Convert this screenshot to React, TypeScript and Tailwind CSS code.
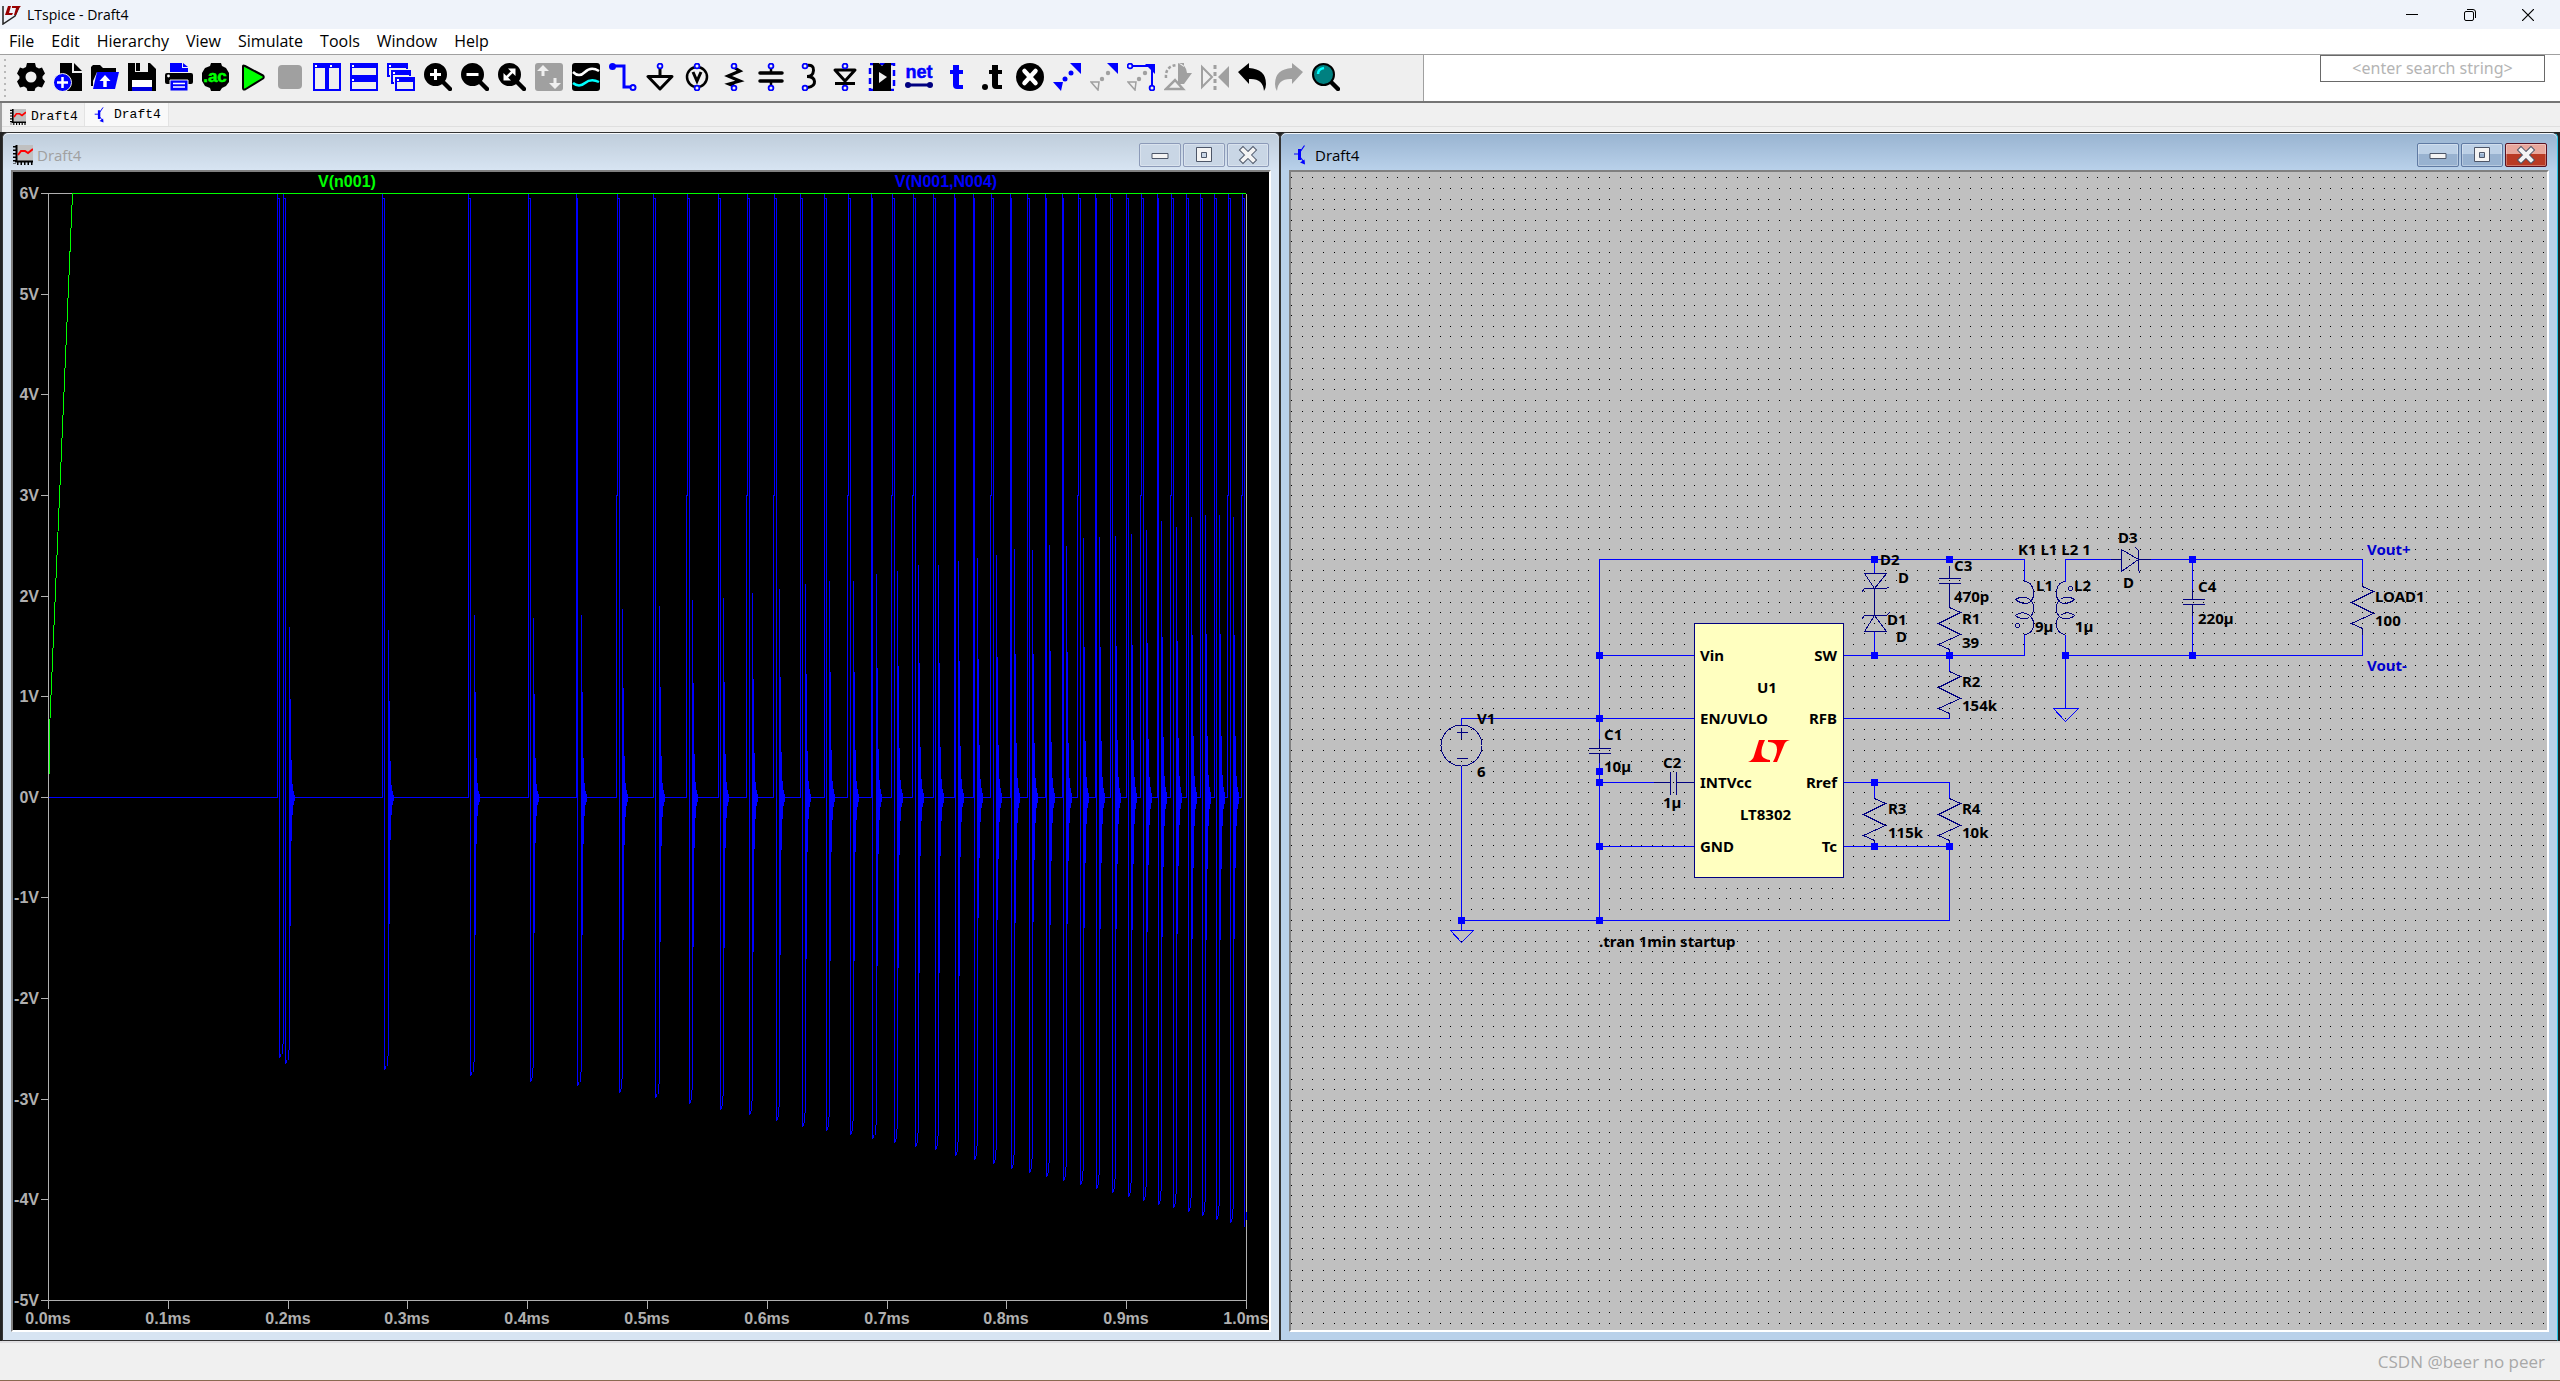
import { ReactNode } from "react";

const menus = ["File", "Edit", "Hierarchy", "View", "Simulate", "Tools", "Window", "Help"];

/* ---------- toolbar icons, all on a 28x28 grid ---------- */

const Pin = ({ x, y }: { x: number; y: number }) => (
  <circle cx={x} cy={y} r="2.4" fill="#efefef" stroke="#00f" strokeWidth="1.8" />
);

const Lens = ({ fill = "#000" }: { fill?: string }) => (
  <>
    <path d="M18 18l8 8" stroke="#000" strokeWidth="4.5" strokeLinecap="round" />
    <circle cx="11.5" cy="11.5" r="10.5" fill={fill} stroke="#000" strokeWidth="2" />
  </>
);

const tools: [string, ReactNode][] = [
  ["Settings", (
    <path fillRule="evenodd" d="M10 0h8l1 4 3 1.500 3-1 3 6-2.500 3 0 2 2.500 3-3 6-4-1-2.500 1.500-1 3h-7l-1-3-2.500-1.500-4 1-3-6 2.500-3 0-2-2.500-3 3-6 3 1 3-1.500zM14 8.500a5.500 5.500 0 1 0 0 11a5.500 5.500 0 1 0 0-11z" />
  )],
  ["New schematic", (
    <>
      <path d="M6 0h12v10h10v18H6z" />
      <path d="M20 0l8 8h-8z" />
      <circle cx="8.500" cy="19.500" r="9" fill="#00f" stroke="#efefef" strokeWidth="1" />
      <path d="M8.500 14v11M3 19.500h11" stroke="#fff" strokeWidth="2.500" />
    </>
  )],
  ["Open", (
    <>
      <path d="M0 4l2-2h7l3 3h13v4H6L2 18V23H0z" />
      <path d="M6 9h22l-4 17H2z" fill="#00f" />
      <path d="M14 24v-9" stroke="#fff" strokeWidth="3.500" />
      <path d="M8.500 18l5.500-6 5.500 6z" fill="#fff" />
    </>
  )],
  ["Save", (
    <>
      <path d="M0 0h22l6 6v22H0z" />
      <path d="M7 0h13v9H7z" fill="#efefef" />
      <path d="M8 0h4v8H8z" />
      <path d="M4 17h20v7H4z" fill="#fff" />
      <path d="M4 24h20v4H4z" fill="#00d" />
    </>
  )],
  ["Print", (
    <>
      <path d="M5 0h12v5h6v4H5z" fill="#00f" />
      <path d="M18 0l5 4h-5z" fill="#00f" />
      <rect y="10" width="28" height="11" rx="2" />
      <circle cx="3.500" cy="13" r="1.400" fill="#fff" />
      <path d="M5 17h18v11H5z" fill="#00f" stroke="#efefef" />
      <path d="M8 20.500h12M8 24h12" stroke="#fff" strokeWidth="1.500" />
    </>
  )],
  ["Edit simulation command", (
    <>
      <path d="M9 0h10l1 3 4 2 3 5v9l-3 4-4 2-2 3h-9l-1-3-5-2-3-5v-8l3-5 5-2z" />
      <text x="13" y="19" textAnchor="middle" className="font-['Liberation_Sans',sans-serif] text-[17px] font-bold" fill="#0f0" stroke="#0f0" strokeWidth=".5">.ac</text>
    </>
  )],
  ["Run", <path d="M4 3v22q0 2 2 1.500L24 15.500q1.500-1.500 0-3L6 3q-2-1-2 0z" fill="#0f0" stroke="#000" strokeWidth="2" strokeLinejoin="round" />],
  ["Halt", <rect x="2" y="2" width="24" height="24" rx="4" fill="#a0a0a0" />],
  ["Tile vertically", (
    <>
      <path fill="#efefef" stroke="#00f" strokeWidth="2" d="M1 1h12v26H1zM15 1h12v26H15z" />
      <path fill="#00f" d="M0 0h28v5H0z" />
      <path fill="#fff" d="M2 2h2v2H2zM17 2h2v2h-2z" />
    </>
  )],
  ["Tile horizontally", (
    <>
      <path fill="#efefef" stroke="#00f" strokeWidth="2" d="M1 1h26v12H1zM1 15h26v12H1z" />
      <path fill="#00f" d="M0 0h28v5H0zM0 13h28v6H0z" />
      <path fill="#fff" d="M2 2h2v2H2zM2 16h2v2H2z" />
    </>
  )],
  ["Cascade", (
    <>
      <path fill="#efefef" stroke="#00f" strokeWidth="2" d="M1 1h19v12H1z" />
      <path fill="#00f" d="M0 0h21v5H0z" />
      <path fill="#efefef" stroke="#efefef" strokeWidth="4" d="M5 8h18v12H5z" />
      <path fill="#efefef" stroke="#00f" strokeWidth="2" d="M5 8h18v12H5z" />
      <path fill="#00f" d="M4 7h20v5H4z" />
      <path fill="#efefef" stroke="#efefef" strokeWidth="4" d="M9 15h18v12H9z" />
      <path fill="#efefef" stroke="#00f" strokeWidth="2" d="M9 15h18v12H9z" />
      <path fill="#00f" d="M8 14h20v5H8z" />
      <path fill="#fff" d="M2 2h2v2H2zM6 9h2v2H6zM10 16h2v2h-2z" />
    </>
  )],
  ["Zoom in", <><Lens /><path d="M11.500 6v11M6 11.500h11" stroke="#fff" strokeWidth="3" /></>],
  ["Zoom out", <><Lens /><path d="M5.500 11.500h12" stroke="#fff" strokeWidth="3" /></>],
  ["Zoom to fit", (
    <>
      <Lens />
      <path d="M8 15l7-7" stroke="#fff" strokeWidth="2.500" />
      <path d="M10 5.500h7.500V13zM5.500 10v7.500H13z" fill="#fff" />
    </>
  )],
  ["Autorange", (
    <>
      <rect width="28" height="28" rx="3" fill="#a0a0a0" />
      <path d="M8 13V5M20 15v8" stroke="#efefef" strokeWidth="3" />
      <path d="M2 8l6-6 6 6zM14 20l6 6 6-6z" fill="#efefef" />
    </>
  )],
  ["Add trace", (
    <>
      <rect width="28" height="28" rx="3" />
      <path d="M1 9q6 6 12 0t14-1" fill="none" stroke="#fff" strokeWidth="2.500" />
      <path d="M1 20q6 5 12 0t14-1" fill="none" stroke="#0ff" strokeWidth="2.500" />
    </>
  )],
  ["Wire", (
    <>
      <path d="M3 3h12v21h8" fill="none" stroke="#00f" strokeWidth="3" />
      <circle cx="3.500" cy="3.500" r="3.500" fill="#00f" />
      <circle cx="24" cy="24.500" r="2.500" fill="#efefef" stroke="#00f" strokeWidth="2" />
    </>
  )],
  ["Ground", (
    <>
      <path d="M14 5v8M2 13.500h24L14 26z" fill="none" stroke="#000" strokeWidth="3" strokeLinejoin="round" />
      <Pin x={14} y={3} />
    </>
  )],
  ["Voltage source", (
    <>
      <circle cx="14" cy="14" r="10" fill="none" stroke="#000" strokeWidth="2.500" />
      <path d="M10 9l4 9 4-9" fill="none" stroke="#000" strokeWidth="3" />
      <Pin x={14} y={3} />
      <Pin x={14} y={25} />
    </>
  )],
  ["Resistor", (
    <>
      <path d="M15 5l5 3-12 5 12 5-11 3 5 2" fill="none" stroke="#000" strokeWidth="3" />
      <Pin x={14} y={3} />
      <Pin x={14} y={25} />
    </>
  )],
  ["Capacitor", (
    <>
      <path d="M3 10h22M3 18h22" stroke="#000" strokeWidth="3.500" strokeLinecap="round" />
      <path d="M14 4v5M14 19v5" stroke="#000" strokeWidth="2.500" />
      <Pin x={14} y={3} />
      <Pin x={14} y={25} />
    </>
  )],
  ["Inductor", (
    <>
      <path d="M13 2.500q7-1 6.500 5t-6.500 6q7 0 7.500 5t-7 6" fill="none" stroke="#000" strokeWidth="3" />
      <Pin x={11} y={3} />
      <Pin x={11} y={25} />
    </>
  )],
  ["Diode", (
    <>
      <path d="M4 7h20L14 18zM4 20.500h20" fill="none" stroke="#000" strokeWidth="3" strokeLinejoin="round" />
      <Pin x={14} y={3} />
      <Pin x={14} y={25} />
    </>
  )],
  ["Component", (
    <>
      <rect x="2" y="1" width="24" height="26" fill="none" stroke="#00f" strokeWidth="2.500" strokeDasharray="6 4" />
      <path d="M5 0h6l3 3 3-3h6v28H5z" />
      <path d="M11 9l8 5-8 6z" fill="#efefef" />
    </>
  )],
  ["Label net", (
    <>
      <text x="14" y="15" textAnchor="middle" className="font-['Liberation_Sans',sans-serif] text-[18px] font-bold" fill="#00f" stroke="#00f" strokeWidth=".5">net</text>
      <path d="M2 22h24" stroke="#000080" strokeWidth="3" />
      <circle cx="3" cy="22" r="3" fill="#000080" />
      <circle cx="25" cy="22" r="3" fill="#000080" />
    </>
  )],
  ["Text", <path d="M11 2h6v5h4v4h-4v11h4v4h-6q-4 0-4-4V11H8V7h3z" fill="#00f" />],
  ["SPICE directive", <><path d="M13 2h6v5h4v4h-4v11h4v4h-6q-4 0-4-4V11h-3V7h3z" /><circle cx="6" cy="24" r="3" /></>],
  ["Delete", <><circle cx="14" cy="14" r="14" /><path d="M8.500 8l11 12M19.500 8l-11 12" stroke="#fff" strokeWidth="4.500" strokeLinecap="round" /></>],
  ["Move", (
    <>
      <path d="M17 0h11v11zM0 19h10L8 28z" fill="#00f" />
      <circle cx="18" cy="10" r="2.500" fill="#00f" />
      <circle cx="12" cy="16" r="2.500" fill="#00f" />
    </>
  )],
  ["Copy", (
    <>
      <path d="M17 0h11v11z" fill="#00f" />
      <path d="M1 19h8L8 27z" fill="none" stroke="#a0a0a0" strokeWidth="1.500" />
      <circle cx="18" cy="10" r="2.200" fill="#a0a0a0" />
      <circle cx="12" cy="16" r="2.200" fill="#a0a0a0" />
    </>
  )],
  ["Drag", (
    <>
      <path d="M4 3h21v20" fill="none" stroke="#00f" strokeWidth="2" />
      <path d="M18 1h10v10z" fill="#00f" />
      <path d="M1 19h8L8 27z" fill="none" stroke="#a0a0a0" strokeWidth="1.500" />
      <circle cx="18" cy="10" r="2.200" fill="#a0a0a0" />
      <circle cx="12" cy="16" r="2.200" fill="#a0a0a0" />
      <Pin x={3} y={3} />
      <Pin x={25} y={25} />
    </>
  )],
  ["Rotate", (
    <>
      <path d="M2 15Q1 3 13 2" fill="none" stroke="#a0a0a0" strokeWidth="2.500" strokeDasharray="3 2" />
      <path d="M14 0q8 1 9 10h5l-8 11V0z" fill="#a0a0a0" />
      <path d="M14 0v21h6V4z" fill="#a0a0a0" />
      <path d="M2 26h17l-8-9z" fill="#efefef" stroke="#a0a0a0" strokeWidth="2.500" />
    </>
  )],
  ["Mirror", (
    <>
      <path d="M1 4v20l10-10z" fill="none" stroke="#a0a0a0" strokeWidth="2" />
      <path d="M28 3v22L17 14z" fill="#a0a0a0" />
      <path d="M14 2v25" stroke="#a0a0a0" strokeWidth="3" strokeDasharray="4 3" />
    </>
  )],
  ["Undo", <path d="M0 9L11 0v5q17 1 17 16 0 4-2 7-1-13-15-12v5z" />],
  ["Redo", <path d="M28 9L17 0v5Q0 6 0 21q0 4 2 7 1-13 15-12v5z" fill="#a0a0a0" />],
  ["Find", <><Lens fill="#008080" /><path d="M6 11q0-5 6-6" fill="none" stroke="#0ff" strokeWidth="2.500" /></>],
];

const PlotIcon = ({ className }: { className: string }) => (
  <svg viewBox="0 0 20 20" className={className}>
    <path d="M3 0h17v16H3z" fill="#c0c0c0" />
    <path d="M3.500 0v17M2 16.500h18" stroke="#000" strokeWidth="2" />
    <path d="M1.500 1v18M4 18.500h16" stroke="#000" strokeWidth="3" strokeDasharray="1.500 2" />
    <path d="M5 10l3-4h4l3 2 5-4" fill="none" stroke="#f00" strokeWidth="2" />
  </svg>
);

const TransistorIcon = ({ className }: { className: string }) => (
  <svg viewBox="0 0 12 20" className={className}>
    <path d="M0 9h5M6 7l4.500-6.500M6 12l4 5" fill="none" stroke="#00f" strokeWidth="1.200" />
    <path d="M4 4h3v11H4zM11 19.500l-5-2 4.500-3z" fill="#00f" />
  </svg>
);

/* ---------- waveform ---------- */

// rise x, fall x, ring x, bottom y, ring peak y
const pulses = [
  [277, 279, 283, 1057, 193],
  [283, 285, 289, 1063, 626],
  [382, 384, 388, 1069, 629],
  [468, 470, 474, 1075, 614],
  [528, 530, 533, 1081, 617],
  [576, 577, 581, 1085, 614],
  [616, 619, 622, 1092, 608],
  [653, 655, 659, 1097, 605],
  [686, 689, 692, 1103, 599],
  [718, 720, 723, 1109, 597],
  [746, 749, 752, 1114, 592],
  [773, 776, 779, 1120, 588],
  [800, 802, 805, 1126, 583],
  [824, 826, 829, 1130, 580],
  [847, 850, 853, 1134, 580],
  [871, 872, 876, 1138, 573],
  [891, 894, 897, 1142, 570],
  [912, 915, 918, 1146, 564],
  [933, 935, 938, 1149, 564],
  [954, 955, 958, 1155, 560],
  [973, 974, 977, 1159, 557],
  [990, 993, 996, 1163, 554],
  [1010, 1011, 1014, 1168, 548],
  [1027, 1029, 1032, 1172, 549],
  [1045, 1046, 1049, 1176, 544],
  [1062, 1063, 1066, 1180, 545],
  [1077, 1080, 1083, 1184, 537],
  [1095, 1096, 1099, 1188, 536],
  [1110, 1112, 1115, 1192, 535],
  [1126, 1128, 1131, 1196, 533],
  [1140, 1143, 1146, 1200, 529],
  [1157, 1158, 1161, 1204, 520],
  [1170, 1173, 1176, 1207, 526],
  [1186, 1188, 1191, 1211, 516],
  [1200, 1202, 1205, 1215, 514],
  [1214, 1216, 1219, 1219, 514],
  [1227, 1230, 1233, 1222, 516],
];

const ringUp = [0.58, 0.22, 0.08, 0.04, 0.02];
const ringDown = [0.5, 0.25, 0.1, 0.04, 0.02];

function tracePath() {
  const zero = 797;
  let d = "";
  let last = 48;
  pulses.forEach(([rise, fall, ring, bottom, peak], i) => {
    const top = fall - rise > 2 ? rise + 1 : rise;
    if (rise > last) d += `M${last} ${zero}H${rise}`;
    d += `M${rise} ${zero}V495H${top}V193M${top} 193V198H${fall}V${bottom}`;
    d += `M${fall + 1} ${bottom - 4}V${bottom - 1}M${ring - 1} ${bottom - 14}V${bottom - 4}M${ring} ${bottom - 14}V${peak}`;
    if (i > 0) {
      const amp = zero - peak;
      ringUp.forEach((up, k) => {
        // the early pulses decay from a deeper first swing
        const down = k === 0 && i < 20 ? 0.75 : ringDown[k];
        d += `M${ring + 1 + k} ${Math.round(zero - amp * up)}V${Math.round(zero + amp * down)}`;
      });
    }
    last = ring;
  });
  return d + "M1233 797H1241M1241 797V495H1242V193M1242 198H1244V1226M1246 1211V1219";
}

function Waveform() {
  return (
    <svg viewBox="13 172 1256 1158" className="block w-full bg-black font-['Liberation_Sans',sans-serif] text-[16px] font-bold">
      <g transform="translate(.5 .5)" shapeRendering="crispEdges" fill="none" strokeWidth="1">
        <path d="M48 193V1308M48 193H72M1246 193V1308M48 1300H1246" stroke="#b0b0b0" />
        {Array.from({ length: 12 }, (_, i) => (
          <path key={i} d={`M40 ${Math.round(193 + i * 100.64)}h8`} stroke="#b0b0b0" />
        ))}
        {Array.from({ length: 9 }, (_, i) => (
          <path key={i} d={`M${Math.round(167.8 + i * 119.8)} 1300v8`} stroke="#b0b0b0" />
        ))}
        <path d="M49 773V730L72 193H1245" stroke="#0f0" />
        <path d={tracePath()} stroke="#00f" />
      </g>
      <g fill="#b0b0b0">
        {Array.from({ length: 12 }, (_, i) => (
          <text key={i} x="39" y={Math.round(199 + i * 100.64)} textAnchor="end">{6 - i}V</text>
        ))}
        {Array.from({ length: 11 }, (_, i) => (
          <text key={i} x={Math.round(48 + i * 119.8)} y="1324" textAnchor="middle">{(i / 10).toFixed(1)}ms</text>
        ))}
      </g>
      <text x="347" y="187" textAnchor="middle" fill="#0f0">V(n001)</text>
      <text x="946" y="187" textAnchor="middle" fill="#00f">V(N001,N004)</text>
    </svg>
  );
}

/* ---------- schematic ---------- */

function gridPath() {
  let d = "";
  for (let r = 0; r < 109; r++) {
    for (let c = 0; c < 119; c++) {
      d += `M${Math.floor(1291.7 + c * 10.605)} ${Math.floor(177.9 + r * 10.603)}h1v1h-1z`;
    }
  }
  return d;
}

const resistors = [[1949, 607], [1949, 671], [1874, 798], [1949, 798], [2362, 586]];

const nodes = [
  [1599, 655], [1599, 718], [1599, 771], [1599, 782], [1599, 846], [1599, 920], [1461, 920],
  [1874, 559], [1949, 559], [1874, 655], [1949, 655], [1874, 782], [1874, 846], [1949, 846],
  [2065, 655], [2192, 559], [2192, 655],
];

const labels: [number, number, string][] = [
  [1477, 724, "V1"], [1477, 777, "6"], [1604, 740, "C1"], [1604, 772, "10µ"],
  [1663, 768, "C2"], [1663, 808, "1µ"], [1700, 661, "Vin"], [1700, 724, "EN/UVLO"],
  [1700, 788, "INTVcc"], [1700, 852, "GND"], [1757, 693, "U1"], [1740, 820, "LT8302"],
  [1599, 947, ".tran 1min startup"], [1880, 565, "D2"], [1898, 583, "D"], [1887, 625, "D1"],
  [1896, 642, "D"], [1954, 571, "C3"], [1954, 602, "470p"], [1962, 624, "R1"], [1962, 648, "39"],
  [1962, 687, "R2"], [1962, 711, "154k"], [1888, 814, "R3"], [1888, 838, "115k"],
  [1962, 814, "R4"], [1962, 838, "10k"], [2036, 591, "L1"], [2074, 591, "L2"],
  [2035, 632, "9µ"], [2075, 632, "1µ"], [2018, 555, "K1 L1 L2 1"], [2118, 543, "D3"],
  [2123, 588, "D"], [2198, 592, "C4"], [2198, 624, "220µ"], [2375, 602, "LOAD1"], [2375, 626, "100"],
];

const pins: [number, string][] = [[661, "SW"], [724, "RFB"], [788, "Rref"], [852, "Tc"]];

const coil =
  "M2024 581C2034 582 2036 596 2029 602C2024 604 2018 602 2015 599C2019 596 2026 596 2029 599C2035 604 2035 611 2029 617C2024 620 2018 618 2015 615C2019 611 2026 612 2029 615C2036 621 2034 633 2024 634";

function Schematic() {
  return (
    <svg viewBox="1291 172 1256 1158" className="block w-full bg-[#c0c0c0] font-['Noto_Sans',sans-serif] text-[15px] font-bold">
      <path d={gridPath()} fill="#000" shapeRendering="crispEdges" />
      <g transform="translate(.5 .5)" shapeRendering="crispEdges" fill="none" strokeWidth="1">
        <g stroke="#00f">
          <path d="M1599 738V559H2024V581M1599 762V920M2024 634V655H1843M1461 724V718H1694M1599 655H1694M1599 782H1653M1599 846H1694" />
          <path d="M1461 766V930M1461 920H1949V846H1843M1843 718H1949V713M1843 782H1949V798M1874 782V798M1874 559V573M1874 631V655" />
          <path d="M1949 655V671M2065 581V559H2110M2150 559H2362V582M2065 634V708M2065 655H2362V634M2192 559V588M2192 615V655" />
          <path d="M1450 930H1473L1461 942ZM2053 708H2078L2065 721Z" />
        </g>
        <g stroke="#000080">
          <rect x="1694" y="623" width="149" height="254" fill="#ffffc0" />
          <circle cx="1461" cy="745" r="20.500" />
          <path d="M1456 732H1467M1461 727V738M1456 758H1467" />
          <path d="M1653 782H1670M1676 782H1694M1670 771V794M1676 771V794M1588 748H1610M1588 753H1610" />
          <path d="M1599 738V748M1599 753V762M1949 565V578M1938 578H1960M1938 583H1960M1949 583V607M1949 649V655" />
          <path d="M1864 573H1886L1874 588ZM1861 592L1864 588H1886L1889 586M1874 588V615M1861 619L1864 615H1886L1889 612M1864 631H1886L1874 615Z" />
          <path d="M2110 559H2121M2138 559H2150M2121 549V571L2138 559ZM2135 547L2138 550V570L2140 573" />
          <path d="M2192 588V599M2182 599H2204M2182 604H2204M2192 604V615M2362 582V586M2362 628V634" />
          {resistors.map(([x, y]) => (
            <path key={`${x}-${y}`} d={`M${x} ${y}l11 5-22 11 22 11-22 10 11 5v4`} />
          ))}
          <path d={coil} />
          <path d={coil} transform="matrix(-1 0 0 1 4089 0)" />
          <circle cx="2017" cy="625" r="2" />
          <circle cx="2070" cy="588" r="2" />
        </g>
      </g>
      {nodes.map(([x, y]) => (
        <rect key={`${x}-${y}`} x={x - 3} y={y - 3} width="7" height="7" fill="#00f" />
      ))}
      <path d="M1759 740h6q-5 10-3 16 2 3 8 4v2h-22q5-2 6-6zM1768 740h22q-5 1-6 5l-7 17h-4q6-11 3-17-2-3-8-3z" fill="#f00" />
      {labels.map(([x, y, text]) => (
        <text key={`${x}-${y}`} x={x} y={y}>{text}</text>
      ))}
      {pins.map(([y, text]) => (
        <text key={text} x="1837" y={y} textAnchor="end">{text}</text>
      ))}
      <text x="2367" y="555" fill="#0000d0">Vout+</text>
      <text x="2367" y="671" fill="#0000d0">Vout-</text>
    </svg>
  );
}

/* ---------- child windows ---------- */

const glyphs: [string, ReactNode][] = [
  ["Minimize", <path d="M6 10.500h16v5H6z" fill="#f4f4f4" stroke="#4d5668" />],
  ["Maximize", <path d="M6.500 4.500h15v14h-15zM11.500 9.500v5h5v-5z" fill="#f4f4f4" fillRule="evenodd" stroke="#4d5668" />],
  ["Close", (
    <g fill="none" strokeLinecap="square">
      <path d="M9 7l10 10M19 7L9 17" stroke="#4d5668" strokeWidth="6" />
      <path d="M9 7l10 10M19 7L9 17" stroke="#f4f4f4" strokeWidth="4" />
    </g>
  )],
];

function ChildWindow({ active = false, icon, children }: { active?: boolean; icon: ReactNode; children: ReactNode }) {
  return (
    <section className={`rounded-t-md border border-[#333] pb-2 ${active ? "border-r-[#28c8e8] bg-[#b9d1ea]" : "bg-[#d7e4f2]"}`}>
      <header
        className={`flex h-[37px] items-center rounded-t-md border-t border-white/80 px-[9px] pt-[5px] ${
          active ? "bg-linear-to-b from-[#99b4d1] to-[#b9d1ea]" : "bg-linear-to-b from-[#bfcddb] to-[#d7e4f2]"
        }`}
      >
        {icon}
        <h2 className={`grow text-[15px] leading-5 ${active ? "text-black" : "text-[#a0a0a0]"}`}>Draft4</h2>
        <div className="mr-px flex gap-[2px]">
          {glyphs.map(([name, glyph]) => (
            <button
              key={name}
              aria-label={name}
              className={`flex h-6 w-[42px] items-center justify-center rounded-xs border ${
                active && name === "Close"
                  ? "border-[#5a1020] bg-linear-to-b from-[#e8a79c] from-45% to-[#b93a24] to-45%"
                  : active
                    ? "border-[#5f7aa3] bg-linear-to-b from-[#bcd0e6] from-45% to-[#98b2d0] to-45%"
                    : "border-[#8c9ab8] bg-[#c9d6e5]"
              } ring-1 ring-white/30 ring-inset`}
            >
              <svg viewBox="0 0 28 24" className="h-6 w-7">{glyph}</svg>
            </button>
          ))}
        </div>
      </header>
      <div className="mx-2 border-2 border-t-[#808080] border-r-white border-b-white border-l-[#808080]">{children}</div>
    </section>
  );
}

export default function App() {
  return (
    <div className="flex min-h-screen flex-col bg-[#f0f0f0] font-['Open_Sans',sans-serif] text-black">
      <header className="flex h-[29px] items-center bg-[#eff3fa]">
        <svg viewBox="0 0 20 20" className="ml-[2px] h-5 w-5">
          <path d="M1 1v18l12-8L17 2" fill="none" stroke="#222" strokeWidth="1.500" />
          <path d="M6 1h3L7 8h4l-1 2H3zM10 1h9l-2 2-3 7h-2l2-7h-4z" fill="#900" />
        </svg>
        <h1 className="ml-[5px] grow text-[14px] leading-5">LTspice - Draft4</h1>
        <button aria-label="Minimize window" className="flex h-full w-[58px] items-center justify-center">
          <svg viewBox="0 0 12 12" className="h-3 w-3"><path d="M0 5.500h12" stroke="#000" /></svg>
        </button>
        <button aria-label="Restore window" className="flex h-full w-[58px] items-center justify-center">
          <svg viewBox="0 0 12 12" className="h-3 w-3" fill="none" stroke="#000">
            <rect x=".5" y="2.500" width="9" height="9" rx="1.500" />
            <path d="M3 .5h6q2.500 0 2.500 2.500v6" />
          </svg>
        </button>
        <button aria-label="Close window" className="mr-[3px] flex h-full w-[58px] items-center justify-center">
          <svg viewBox="0 0 12 12" className="h-3 w-3"><path d="M0 0l12 12M12 0L0 12" stroke="#000" strokeWidth="1.200" /></svg>
        </button>
      </header>

      <nav className="flex h-[26px] items-start gap-[17px] border-b border-[#a0a0a0] bg-white pl-[9px] text-[16px] leading-6">
        {menus.map((name) => (
          <button key={name}>{name}</button>
        ))}
      </nav>

      <div className="flex h-12 items-start justify-between border-b-2 border-[#757575] bg-white">
        <div className="flex h-full w-[1424px] items-start border-r border-[#a0a0a0] bg-[#efefef] pt-1">
          <div className="mr-[6px] ml-1 h-10 w-[2px] bg-[repeating-linear-gradient(#b8b8b8_0_2px,#efefef_2px_6px)]" />
          {tools.map(([name, icon]) => (
            <button key={name} aria-label={name} className="flex h-9 w-[37px] items-center justify-center">
              <svg viewBox="0 0 28 28" className="h-7 w-7">{icon}</svg>
            </button>
          ))}
        </div>
        <input
          aria-label="Search"
          placeholder="<enter search string>"
          className="mr-[15px] h-[27px] w-[225px] border border-[#696969] bg-white pb-[2px] text-center font-['Noto_Sans',sans-serif] text-[16px] placeholder:text-[#b4b4b4]"
        />
      </div>

      <div className="h-[29px] border-l-2 border-[#a0a0a0] pt-px">
        <div role="tablist" className="flex h-[23px] items-end border-b border-[#dfdfdf] pl-[2px] font-['Liberation_Mono',monospace] text-[13px] leading-4">
          <button role="tab" className="flex h-[21px] w-20 items-center gap-[5px] bg-[#f2f2f2] pt-[2px] pl-1.5">
            <PlotIcon className="h-4 w-4" />
            Draft4
          </button>
          <button role="tab" aria-selected="true" className="flex h-[23px] w-[85px] items-center gap-[9px] border-x border-[#e3e3e3] bg-[#f9f9f9] pl-[9px]">
            <TransistorIcon className="h-4 w-[11px]" />
            Draft4
          </button>
        </div>
      </div>

      <main className="grid grid-cols-2 bg-[#222] px-[2px]">
        <ChildWindow icon={<PlotIcon className="mr-1 ml-px h-5 w-5" />}>
          <Waveform />
        </ChildWindow>
        <ChildWindow active icon={<TransistorIcon className="mr-[9px] ml-1 h-5 w-3" />}>
          <Schematic />
        </ChildWindow>
      </main>

      <footer className="flex grow items-center justify-end border-t-2 border-b border-t-[#e0dfe2] border-b-[#8a6a50] pr-[15px] text-[17px] leading-6 text-[#a8a8a8]">
        CSDN @beer no peer
      </footer>
    </div>
  );
}
